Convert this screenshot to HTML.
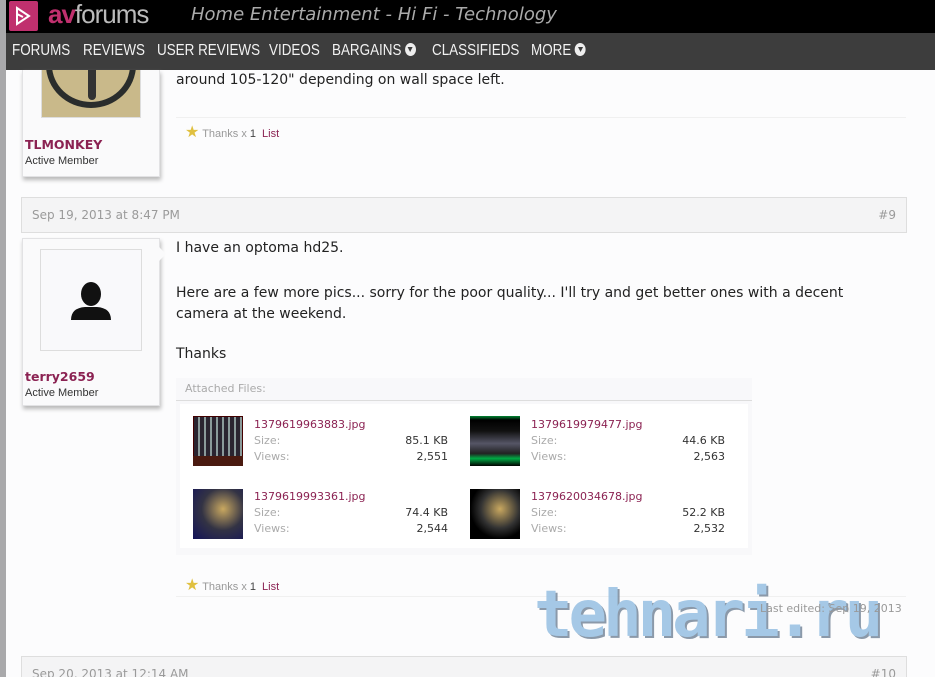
<!DOCTYPE html>
<html><head><meta charset="utf-8"><style>
*{margin:0;padding:0;box-sizing:border-box}
html,body{width:935px;height:677px;overflow:hidden}
body{background:#fcfcfd;font-family:"DejaVu Sans",Verdana,sans-serif;position:relative}
.a{position:absolute}
.strip{left:0;top:0;width:6px;height:677px;background:#a9a9ab}
.hdr{left:6px;top:0;width:929px;height:33px;background:#000}
.nav{left:6px;top:33px;width:929px;height:37px;background:#3d3d3d}
.nav span{position:absolute;top:9px;color:#f2f2f2;font-family:"Liberation Sans",Arial,sans-serif;font-size:16px;transform:scaleX(.84);transform-origin:0 0;white-space:nowrap}
.circ{display:inline-block;width:13px;height:13px;border-radius:50%;background:#eee;vertical-align:-1px;position:relative;margin-left:4px}
.circ:after{content:"";position:absolute;left:3.5px;top:4px;border:3px solid transparent;border-top:5px solid #3d3d3d}
.card{background:#fafafb;border:1px solid #e2e2e4;box-shadow:1px 3px 4px #b8b8b8}
.name{color:#8b2252;font-weight:bold;font-size:12.5px}
.role{font-family:"Liberation Sans",Arial,sans-serif;font-size:11px;color:#333}
.txt{font-size:14px;color:#222}
.db{background:#f4f4f5;border:1px solid #dedede;height:36px}
.db span{position:absolute;top:10px;font-size:12px;color:#9a9a9a}
.th{font-family:"Liberation Sans",Arial,sans-serif;font-size:11px;color:#999}
.th b{font-weight:normal;color:#444}
.th i{font-style:normal;color:#8b2252;margin-left:6px}
.fn{font-size:11px;color:#8b2252}
.lb{font-size:11px;color:#aaa}
.v{font-size:11px;color:#333;text-align:right;width:80px}
.wm{font-family:"DejaVu Sans Mono",monospace;font-weight:bold;font-size:64px;color:#9cc3e4;letter-spacing:-4px;text-shadow:2px 2px 0 #7f8fa0;opacity:.9}
</style></head><body>
<div class="a strip"></div>
<div class="a hdr">
 <div class="a" style="left:3px;top:1px;width:29px;height:30px;background:#c0306e;border-radius:2px"></div>
 <svg class="a" style="left:8px;top:6px" width="18" height="20" viewBox="0 0 18 20"><path d="M3 2 L15 10 L3 18 Z" fill="none" stroke="#fff" stroke-width="2"/><path d="M3 8 L9 11" stroke="#fff" stroke-width="2"/></svg>
 <span class="a" style="left:42px;top:-1px;font-family:'Liberation Sans',sans-serif;font-size:26px;color:#c0306e;font-weight:bold;letter-spacing:-1px">av<span style="color:#bbb;font-weight:normal">forums</span></span>
 <span class="a" style="left:185px;top:4px;font-family:'DejaVu Sans',sans-serif;font-style:italic;font-size:18px;color:#aaa">Home Entertainment - Hi Fi - Technology</span>
</div>
<div class="a nav">
 <span style="left:6px">FORUMS</span><span style="left:77px">REVIEWS</span><span style="left:151px">USER REVIEWS</span><span style="left:263px">VIDEOS</span><span style="left:326px">BARGAINS<i class="circ"></i></span><span style="left:426px">CLASSIFIEDS</span><span style="left:525px">MORE<i class="circ"></i></span>
</div>

<div class="a card" style="left:22px;top:70px;width:138px;height:107px;border-top:none"></div>
<div class="a" style="left:41px;top:70px;width:100px;height:48px;border:1px solid #ddd;border-top:none;background:#c9b98a;overflow:hidden">
 <div class="a" style="left:4px;top:-48px;width:90px;height:86px;border-radius:50%;border:6px solid #2a2d2c"></div>
 <div class="a" style="left:46px;top:0;width:8px;height:30px;background:#333;border-radius:0 0 4px 4px"></div>
</div>
<div class="a name" style="left:25px;top:137px">TLMONKEY</div>
<div class="a role" style="left:25px;top:155px">Active Member</div>
<div class="a txt" style="left:176px;top:72px">around 105-120" depending on wall space left.</div>
<div class="a" style="left:176px;top:117px;width:730px;height:1px;background:#f0f0f0"></div>
<div class="a th" style="left:185px;top:122px"><span style="color:#e0c040;font-size:16px">★</span> Thanks x <b>1</b><i>List</i></div>

<div class="a db" style="left:21px;top:197px;width:886px"><span style="left:10px">Sep 19, 2013 at 8:47 PM</span><span style="right:10px">#9</span></div>

<div class="a card" style="left:22px;top:238px;width:138px;height:168px"></div>
<div class="a" style="left:158px;top:246px;width:0;height:0;border:8px solid transparent;border-left:8px solid #fafafb"></div>
<div class="a" style="left:40px;top:249px;width:102px;height:102px;border:1px solid #ddd;background:#f9f9fb"></div>
<svg class="a" style="left:70px;top:280px" width="42" height="42" viewBox="0 0 42 42"><ellipse cx="21" cy="14" rx="10" ry="12" fill="#111"/><path d="M1 40 Q1 28 15 27 L27 27 Q41 28 41 40 Z" fill="#111"/></svg>
<div class="a name" style="left:25px;top:369px">terry2659</div>
<div class="a role" style="left:25px;top:387px">Active Member</div>
<div class="a txt" style="left:176px;top:240px">I have an optoma hd25.</div>
<div class="a txt" style="left:176px;top:283px;line-height:21px">Here are a few more pics... sorry for the poor quality... I'll try and get better ones with a decent<br>camera at the weekend.</div>
<div class="a txt" style="left:176px;top:346px">Thanks</div>

<div class="a" style="left:176px;top:378px;width:576px;height:177px;background:#f8f8fa"></div>
<div class="a" style="left:176px;top:400px;width:576px;height:1px;background:#ddd"></div>
<div class="a lb" style="left:185px;top:382px">Attached Files:</div>
<div class="a" style="left:180px;top:404px;width:568px;height:144px;background:#fff"></div>

<div class="a" style="left:193px;top:416px;width:50px;height:50px;background:repeating-linear-gradient(90deg,#2a2430 0 4px,#8a9a9a 4px 6px),#222;border:1px solid #400"></div>
<div class="a" style="left:193px;top:456px;width:50px;height:10px;background:#4a1a10"></div>
<div class="a" style="left:470px;top:416px;width:50px;height:50px;background:linear-gradient(#083 0,#000 8%,#111 30%,#556 55%,#222 75%,#0a4 85%,#000)"></div>
<div class="a" style="left:193px;top:489px;width:50px;height:50px;background:radial-gradient(circle at 60% 40%,#c9a860,#334 50%,#13135a)"></div>
<div class="a" style="left:470px;top:489px;width:50px;height:50px;background:radial-gradient(circle at 60% 40%,#c9a860,#333 45%,#000 70%)"></div>

<div class="a fn" style="left:254px;top:418px">1379619963883.jpg</div>
<div class="a lb" style="left:254px;top:434px">Size:</div><div class="a lb" style="left:254px;top:450px">Views:</div>
<div class="a v" style="left:368px;top:434px">85.1 KB</div><div class="a v" style="left:368px;top:450px">2,551</div>
<div class="a fn" style="left:531px;top:418px">1379619979477.jpg</div>
<div class="a lb" style="left:531px;top:434px">Size:</div><div class="a lb" style="left:531px;top:450px">Views:</div>
<div class="a v" style="left:645px;top:434px">44.6 KB</div><div class="a v" style="left:645px;top:450px">2,563</div>
<div class="a fn" style="left:254px;top:490px">1379619993361.jpg</div>
<div class="a lb" style="left:254px;top:506px">Size:</div><div class="a lb" style="left:254px;top:522px">Views:</div>
<div class="a v" style="left:368px;top:506px">74.4 KB</div><div class="a v" style="left:368px;top:522px">2,544</div>
<div class="a fn" style="left:531px;top:490px">1379620034678.jpg</div>
<div class="a lb" style="left:531px;top:506px">Size:</div><div class="a lb" style="left:531px;top:522px">Views:</div>
<div class="a v" style="left:645px;top:506px">52.2 KB</div><div class="a v" style="left:645px;top:522px">2,532</div>

<div class="a th" style="left:185px;top:575px"><span style="color:#e0c040;font-size:16px">★</span> Thanks x <b>1</b><i>List</i></div>
<div class="a" style="left:176px;top:596px;width:730px;height:1px;background:#f0f0f0"></div>
<div class="a wm" style="left:534px;top:578px">tehnari.ru</div>
<div class="a" style="left:760px;top:602px;font-size:11px;color:#999">Last edited: Sep 19, 2013</div>

<div class="a db" style="left:21px;top:656px;width:886px"><span style="left:10px">Sep 20, 2013 at 12:14 AM</span><span style="right:10px">#10</span></div>
</body></html>
